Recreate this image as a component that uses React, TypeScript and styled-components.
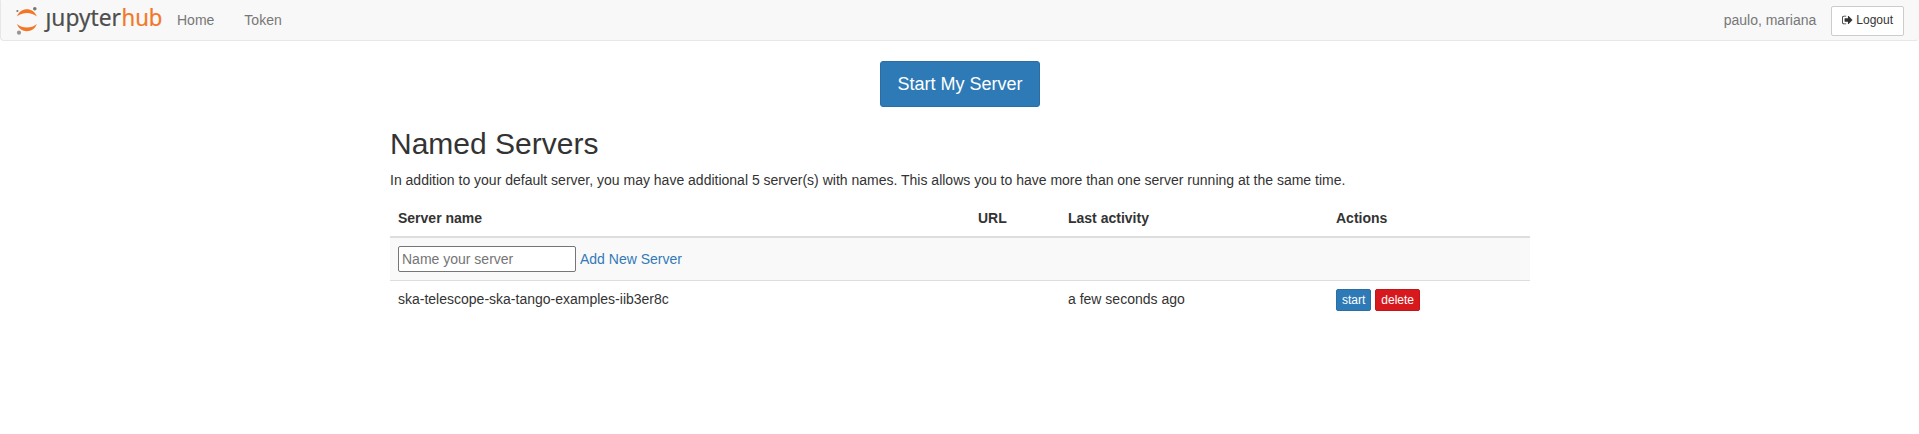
import React from "react";
import styled, { createGlobalStyle } from "styled-components";

const GlobalStyle = createGlobalStyle`
  *, *::before, *::after { box-sizing: border-box; }
  body {
    margin: 0;
    background: #fff;
    color: #333;
    font: 14px/20px "Liberation Sans", Arial, sans-serif;
  }
`;

const Navbar = styled.nav`
  display: flex;
  align-items: center;
  height: 41px;
  padding: 0 14px 0 15px;
  background: #f8f8f8;
  border: 1px solid #e7e7e7;
  border-top-color: #f8f8f8;
  border-right-color: #f8f8f8;
  border-radius: 0 0 4px 4px;
`;

const Logo = styled.svg`
  width: 146px;
  height: 30px;
  display: block;
  overflow: visible;
`;

const NavLink = styled.a`
  padding: 0 15px 2px;
  color: #777;
  text-decoration: none;
`;

const UserArea = styled.div`
  display: flex;
  align-items: center;
  gap: 15px;
  margin-left: auto;
`;

const UserName = styled.span`
  padding-bottom: 2px;
  color: #777;
`;

const Button = styled.button<{ $tone: "plain" | "primary" | "danger"; $size: "lg" | "sm" | "xs" }>`
  display: inline-flex;
  align-items: center;
  justify-content: center;
  font-family: inherit;
  border: 1px solid;
  white-space: nowrap;
  ${({ $tone }) =>
    ({
      plain: "background: #fff; color: #333; border-color: #ccc;",
      primary: "background: #2e7ab6; color: #fff; border-color: #2a6ea3;",
      danger: "background: #d7191e; color: #fff; border-color: #c0171b;",
    })[$tone]}
  ${({ $size }) =>
    ({
      lg: "height: 46px; padding: 0 16px; font-size: 18px; line-height: 24px; border-radius: 3px;",
      sm: "height: 30px; padding: 0 10px 2px; font-size: 12px; line-height: 18px; border-radius: 2px; gap: 3px;",
      xs: "height: 22px; padding: 0 5px 1px; font-size: 12px; line-height: 18px; border-radius: 2px;",
    })[$size]}
`;

const Container = styled.main`
  width: 1140px;
  margin: 20px 0 0 390px;
`;

const Centered = styled.div`
  display: flex;
  justify-content: center;
`;

const Title = styled.h2`
  margin: 20px 0 10px;
  font-size: 30px;
  font-weight: 400;
  line-height: 33px;
`;

const Description = styled.p`
  margin: 0 0 10px;
`;

const Table = styled.table`
  width: 100%;
  table-layout: fixed;
  border-collapse: collapse;
`;

const HeaderCell = styled.th<{ $width: number }>`
  width: ${({ $width }) => $width}px;
  height: 37px;
  padding: 8px 8px 7px;
  text-align: left;
  vertical-align: top;
  font-weight: 700;
  border-bottom: 2px solid #ddd;
`;

const Row = styled.tr<{ $striped?: boolean }>`
  background: ${({ $striped }) => ($striped ? "#f9f9f9" : "#fff")};
`;

const Cell = styled.td`
  padding: 8px;
  vertical-align: top;
  border-top: 1px solid #ddd;
`;

const Inline = styled.div`
  display: flex;
  align-items: center;
  gap: 4px;
`;

const NameInput = styled.input`
  width: 178px;
  height: 26px;
  padding: 1px 3px;
  font: inherit;
  border: 1px solid #767676;
  border-radius: 2px;
  &::placeholder { color: #757575; }
`;

const AddLink = styled.a`
  color: #337ab7;
  text-decoration: none;
`;

const JupyterHubLogo = () => (
  <Logo viewBox="0 0 146 30" aria-label="jupyterhub">
    <path d="M1 10.5C4.500 0.9 17.3 0.9 20.8 10.5C15.5 5.8 6.3 5.8 1 10.5Z" fill="#f37726" />
    <path d="M1 18.1C4.5 27.7 17.3 27.7 20.8 18.1C15.5 22.8 6.3 22.8 1 18.1Z" fill="#f37726" />
    <circle cx="1.4" cy="5" r="1.1" fill="#767677" />
    <circle cx="18.8" cy="2.8" r="1.8" fill="#767677" />
    <circle cx="3" cy="26.7" r="2.1" fill="#989798" />
    <text x="29.5" y="20" fontFamily="'Noto Sans', sans-serif" fontSize="23" fill="#4e4e4e" stroke="#4e4e4e" strokeWidth="0.2" textLength="75.5" lengthAdjust="spacingAndGlyphs">
      ȷupyter
    </text>
    <text x="105.5" y="20" fontFamily="'Noto Sans', sans-serif" fontSize="23" fill="#f37726" stroke="#f37726" strokeWidth="0.2" textLength="41" lengthAdjust="spacingAndGlyphs">
      hub
    </text>
  </Logo>
);

const LogoutIcon = () => (
  <svg width="11" height="12" viewBox="0 0 1664 1792" fill="currentColor">
    <path d="M640 1440q0 4 1 20t.5 26.500-3 23.500-10 19.500-20.500 6.500H288q-119 0-203.500-84.500T0 1248V544q0-119 84.500-203.500T288 256h320q13 0 22.500 9.500T640 288q0 4 1 20t.5 26.500-3 23.500-10 19.500T608 384H288q-66 0-113 47t-47 113v704q0 66 47 113t113 47h312l11.500 1 11.500 3 8 5.500 7 9 2 13.500zm928-544q0 26-19 45l-544 544q-19 19-45 19t-45-19-19-45v-288H448q-26 0-45-19t-19-45V704q0-26 19-45t45-19h448V352q0-26 19-45t45-19 45 19l544 544q19 19 19 45z" />
  </svg>
);

const columns = [
  { label: "Server name", width: 580 },
  { label: "URL", width: 90 },
  { label: "Last activity", width: 268 },
  { label: "Actions", width: 202 },
];

export default function App() {
  return (
    <>
      <GlobalStyle />
      <Navbar>
        <JupyterHubLogo />
        <NavLink>Home</NavLink>
        <NavLink>Token</NavLink>
        <UserArea>
          <UserName>paulo, mariana</UserName>
          <Button $tone="plain" $size="sm">
            <LogoutIcon />
            Logout
          </Button>
        </UserArea>
      </Navbar>
      <Container>
        <Centered>
          <Button $tone="primary" $size="lg">Start My Server</Button>
        </Centered>
        <Title>Named Servers</Title>
        <Description>
          In addition to your default server, you may have additional 5 server(s) with names. This allows you to have
          more than one server running at the same time.
        </Description>
        <Table>
          <thead>
            <tr>
              {columns.map(({ label, width }) => (
                <HeaderCell key={label} $width={width}>{label}</HeaderCell>
              ))}
            </tr>
          </thead>
          <tbody>
            <Row $striped>
              <Cell colSpan={4}>
                <Inline>
                  <NameInput placeholder="Name your server" />
                  <AddLink>Add New Server</AddLink>
                </Inline>
              </Cell>
            </Row>
            <Row>
              <Cell>ska-telescope-ska-tango-examples-iib3er8c</Cell>
              <Cell />
              <Cell>a few seconds ago</Cell>
              <Cell>
                <Inline>
                  <Button $tone="primary" $size="xs">start</Button>
                  <Button $tone="danger" $size="xs">delete</Button>
                </Inline>
              </Cell>
            </Row>
          </tbody>
        </Table>
      </Container>
    </>
  );
}
